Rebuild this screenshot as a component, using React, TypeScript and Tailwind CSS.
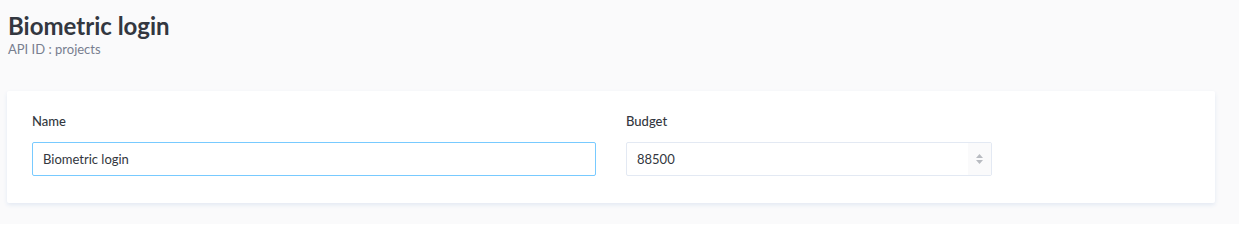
import React from "react";

const font = { fontFamily: "Lato, 'Open Sans', sans-serif" };

const Spinner = () => (
  <div className="absolute right-px top-px bottom-px flex w-[23px] flex-col items-center justify-center gap-[2px] bg-[#fafafb]">
    <svg width="7" height="4" viewBox="0 0 7 4">
      <path d="M3.5 0 L7 4 L0 4 Z" fill="#b8bbc1" />
    </svg>
    <svg width="7" height="4" viewBox="0 0 7 4">
      <path d="M0 0 L7 0 L3.5 4 Z" fill="#b8bbc1" />
    </svg>
  </div>
);

export default function App() {
  return (
    <div
      className="min-h-[224px] w-[1239px] bg-[#fafafb] pt-[11px] text-[#333740]"
      style={font}
    >
      <div className="pl-[8px]">
        <h1 className="text-[24px] font-bold leading-[30px] text-[#333740]">
          Biometric login
        </h1>
        <p className="text-[13px] leading-[16px] text-[#787e8f]">
          API ID : projects
        </p>
      </div>

      <div className="ml-[7px] mt-[34px] w-[1208px] rounded-[2px] bg-white pb-[27px] pl-[25px] pt-[22px] shadow-[0_2px_4px_#e3e9f3]">
        <div className="flex gap-[30px]">
          <div className="w-[564px]">
            <label className="block text-[13px] font-medium leading-[16px] text-[#333740]">
              Name
            </label>
            <input
              readOnly
              value="Biometric login"
              className="mt-[13px] block h-[34px] w-full rounded-[2px] border border-[#78caff] bg-white px-[10px] text-[13px] text-[#333740] outline-none"
            />
          </div>
          <div className="w-[366px]">
            <label className="block text-[13px] font-medium leading-[16px] text-[#333740]">
              Budget
            </label>
            <div className="relative mt-[13px]">
              <input
                readOnly
                value="88500"
                className="block h-[34px] w-full rounded-[2px] border border-[#e3e9f3] bg-white px-[10px] text-[13px] text-[#333740] outline-none"
              />
              <Spinner />
            </div>
          </div>
        </div>
      </div>
    </div>
  );
}
